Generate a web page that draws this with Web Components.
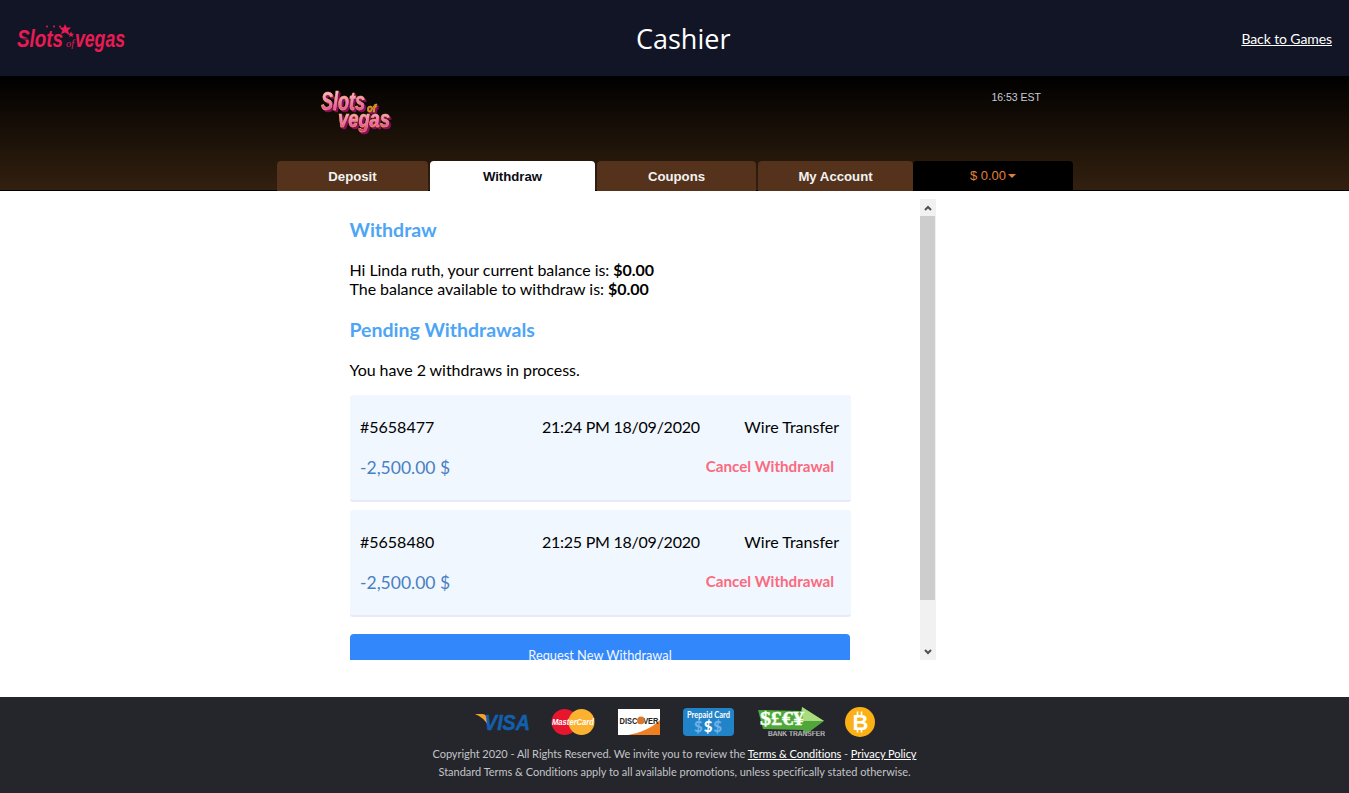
<!DOCTYPE html>
<html lang="en">
<head>
<meta charset="utf-8">
<title>Cashier</title>
<style>
  html, body { margin: 0; height: 100%; overflow: hidden; background: #fff; }
  body { font-family: Lato, "Liberation Sans", sans-serif; }
</style>
</head>
<body>
<cashier-app></cashier-app>

<script>
class CashierApp extends HTMLElement {
  connectedCallback() {
    this.attachShadow({ mode: 'open' });
    this.shadowRoot.innerHTML = `
      <style>
        :host { display: flex; flex-direction: column; height: 793px; }
        main { flex: 1; min-height: 0; padding: 8px 0 0 342px; background: #fff; }
      </style>
      <top-bar></top-bar>
      <cashier-banner active="Withdraw"></cashier-banner>
      <main><withdraw-panel></withdraw-panel></main>
      <site-footer></site-footer>
    `;
  }
}

class TopBar extends HTMLElement {
  connectedCallback() {
    this.attachShadow({ mode: 'open' });
    this.shadowRoot.innerHTML = `
      <style>
        :host { display: flex; align-items: center; justify-content: space-between; height: 76px; padding: 0 17px 0 18px; background: #111525; color: #fff; }
        svg { display: block; width: 107px; height: 30px; overflow: visible; }
        h1 { margin: 2px 0 0; font: 400 27px/38px "Open Sans", sans-serif; }
        a { color: #fff; margin-top: 2px; font: 400 14px/20px Lato, sans-serif; letter-spacing: -.1px; text-decoration: underline; }
      </style>
      <svg viewBox="0 0 107 30" aria-label="Slots of Vegas">
        <g fill="#ea1b53">
          <polygon points="47,1 48.6,4.4 53,4.4 50,7.4 51.4,12 47.2,9.4 43,11 44.4,7.4 41.4,4.4 45.6,4.6"/>
          <circle cx="29" cy="3.5" r="1"/><circle cx="36" cy="3.5" r="1"/><circle cx="42" cy="3.5" r="1"/>
          <polygon points="53,8.6 54,10.6 56,11 54.4,12.2 55,14.2 53,13.1 51.2,14.2 51.8,12.2 50,11 52,10.6"/>
          <text x="-1" y="24" font-family="'Liberation Sans', sans-serif" font-weight="700" font-style="italic" font-size="23" textLength="46" lengthAdjust="spacingAndGlyphs">Slots</text>
          <text x="48" y="24" font-family="'Liberation Serif', serif" font-style="italic" font-size="10" textLength="8" lengthAdjust="spacingAndGlyphs">of</text>
          <text x="57" y="24" font-family="'Liberation Sans', sans-serif" font-weight="700" font-style="italic" font-size="23" textLength="50" lengthAdjust="spacingAndGlyphs">vegas</text>
        </g>
        <rect x="-2" y="15.5" width="13" height="1" fill="#111525"/>
      </svg>
      <h1>Cashier</h1>
      <a href="#">Back to Games</a>
    `;
  }
}

class CashierBanner extends HTMLElement {
  connectedCallback() {
    const active = this.getAttribute('active');
    const tabs = ['Deposit', 'Withdraw', 'Coupons', 'My Account'];
    this.attachShadow({ mode: 'open' });
    this.shadowRoot.innerHTML = `
      <style>
        :host { display: block; height: 115px; box-sizing: border-box; padding-left: 277px; background: linear-gradient(#000, #33200f); border-bottom: 1px solid #000; }
        .wrap { width: 796px; height: 115px; display: flex; flex-direction: column; justify-content: space-between; }
        .top { display: flex; justify-content: space-between; padding: 14px 32px 0 41px; }
        svg { display: block; width: 74px; height: 44px; overflow: visible; filter: drop-shadow(1px 1px 0 #8a0f5c) drop-shadow(1px 1px 0 #8a0f5c); }
        time { font: 400 10.5px/14px "Liberation Sans", sans-serif; color: #c9ccd6; }
        nav { display: grid; grid-template-columns: 151px 165px 159px 155px 158px; column-gap: 2px; height: 30px; }
        nav a { font: 700 13.2px/31px "Liberation Sans", sans-serif; text-align: center; color: #f2f2f2; background: #54321b; border-radius: 4px 4px 0 0; text-decoration: none; }
        nav a.on { background: #fff; color: #0b0b14; }
        nav a.bal { margin-left: -2px; background: #000; color: #e08038; font-weight: 400; font-size: 13px; line-height: 30px; }
        nav a.bal::after { content: ""; display: inline-block; width: 0; height: 0; margin-left: 2px; vertical-align: 2px; border: 4px solid transparent; border-top-color: #e08038; border-bottom: 0; }
      </style>
      <div class="wrap">
        <div class="top">
          <svg viewBox="0 0 74 44" aria-label="Slots of Vegas">
            <defs>
              <linearGradient id="logo" x1="0" y1="0" x2="0" y2="1">
                <stop offset="0" stop-color="#ffd6f2"/><stop offset="1" stop-color="#e32a9c"/>
              </linearGradient>
            </defs>
            <g fill="url(#logo)" stroke="#efc12a" stroke-width=".5" font-family="'Liberation Sans', sans-serif" font-weight="700" font-style="italic">
              <text x="3" y="20" font-size="25" textLength="44" lengthAdjust="spacingAndGlyphs">Slots</text>
              <text x="49" y="22" font-size="11" fill="#b8860b" textLength="9" lengthAdjust="spacingAndGlyphs">of</text>
              <text x="20" y="37" font-size="23" textLength="52" lengthAdjust="spacingAndGlyphs">vegas</text>
            </g>
          </svg>
          <time>16:53 EST</time>
        </div>
        <nav>
          ${tabs.map(t => `<a href="#" class="${t === active ? 'on' : ''}">${t}</a>`).join('')}
          <a href="#" class="bal">$ 0.00</a>
        </nav>
      </div>
    `;
  }
}

class WithdrawPanel extends HTMLElement {
  connectedCallback() {
    this.attachShadow({ mode: 'open' });
    this.shadowRoot.innerHTML = `
      <style>
        :host { display: flex; width: 594px; height: 461px; }
        .scroll { width: 578px; overflow: hidden; box-sizing: border-box; padding: 18px 70px 0 8px; color: #000; font: 400 16px/19px Lato, sans-serif; }
        h2 { margin: 0 0 0 -.5px; color: #4ea5f6; font: 700 19.5px/26px Lato, sans-serif; }
        p { margin: 0 0 0 -.5px; letter-spacing: -.05px; }
        .bal { margin-top: 17px; }
        h2.pending { margin-top: 19px; }
        .count { margin-top: 17px; margin-bottom: 16px; }
        withdrawal-card + withdrawal-card { margin-top: 8px; }
        button { display: block; width: 500px; height: 42px; margin-top: 17px; padding: 0; border: 0; border-radius: 4px; background: #3287fb; color: #f2f7ff; font: 400 12.8px/19px Lato, sans-serif; }
        b { font-weight: 700; }
      </style>
      <div class="scroll">
        <h2>Withdraw</h2>
        <p class="bal">Hi Linda ruth, your current balance is: <b>$0.00</b><br>The balance available to withdraw is: <b>$0.00</b></p>
        <h2 class="pending">Pending Withdrawals</h2>
        <p class="count">You have 2 withdraws in process.</p>
        <withdrawal-card ref="#5658477" date="21:24 PM 18/09/2020"></withdrawal-card>
        <withdrawal-card ref="#5658480" date="21:25 PM 18/09/2020"></withdrawal-card>
        <button>Request New Withdrawal</button>
      </div>
      <fake-scrollbar></fake-scrollbar>
    `;
  }
}

class WithdrawalCard extends HTMLElement {
  connectedCallback() {
    this.attachShadow({ mode: 'open' });
    this.shadowRoot.innerHTML = `
      <style>
        :host { display: block; width: 501px; height: 107px; box-sizing: border-box; padding: 22px 12px 0 10px; background: #f0f7fe; border-radius: 3px; border-bottom: 2px solid #e6e9fa; font: 400 16px/20px Lato, sans-serif; }
        .first { display: grid; grid-template-columns: 182px 1fr auto; }
        .date { letter-spacing: -.25px; }
        .second { display: flex; justify-content: space-between; align-items: center; margin-top: 19px; padding-right: 5px; }
        .amt { color: #4a7fc1; font-size: 17.5px; line-height: 24px; }
        a { color: #fb6a7e; font-size: 15.2px; font-weight: 700; text-decoration: none; line-height: 20px; margin-top: -4px; }
      </style>
      <div class="first">
        <span>${this.getAttribute('ref')}</span>
        <span class="date">${this.getAttribute('date')}</span>
        <span>Wire Transfer</span>
      </div>
      <div class="second">
        <span class="amt">-2,500.00 $</span>
        <a href="#">Cancel Withdrawal</a>
      </div>
    `;
  }
}

class FakeScrollbar extends HTMLElement {
  connectedCallback() {
    this.attachShadow({ mode: 'open' });
    this.shadowRoot.innerHTML = `
      <style>
        :host { display: flex; flex-direction: column; width: 16px; height: 461px; background: #f1f1f1; }
        .btn { height: 17px; display: flex; align-items: center; justify-content: center; }
        .thumb { height: 384px; background: #cdcdcd; margin-right: 1px; }
        .track { flex: 1; }
        svg { width: 8px; height: 6px; fill: none; stroke: #505050; stroke-width: 2; }
      </style>
      <div class="btn"><svg viewBox="0 0 8 6"><path d="M1 5 L4 2 L7 5"/></svg></div>
      <div class="thumb"></div>
      <div class="track"></div>
      <div class="btn"><svg viewBox="0 0 8 6"><path d="M1 1 L4 4 L7 1"/></svg></div>
    `;
  }
}

class SiteFooter extends HTMLElement {
  connectedCallback() {
    this.attachShadow({ mode: 'open' });
    this.shadowRoot.innerHTML = `
      <style>
        :host { display: block; height: 96px; box-sizing: border-box; padding-top: 10px; background: #25262b; color: #c3c4c7; font: 400 11px/18px Lato, sans-serif; letter-spacing: -.05px; text-align: center; }
        .icons { display: flex; justify-content: center; height: 30px; margin-bottom: 8px; padding-left: 1px; }
        a { color: #fff; text-decoration: underline; }
        p { margin: 0; }
        p + p { letter-spacing: -.02px; }
      </style>
      <div class="icons"><pay-icons></pay-icons></div>
      <p>Copyright 2020 - All Rights Reserved. We invite you to review the <a href="#">Terms &amp; Conditions</a> - <a href="#">Privacy Policy</a></p>
      <p>Standard Terms &amp; Conditions apply to all available promotions, unless specifically stated otherwise.</p>
    `;
  }
}

class PayIcons extends HTMLElement {
  connectedCallback() {
    this.attachShadow({ mode: 'open' });
    this.shadowRoot.innerHTML = `
      <style>
        :host { display: flex; align-items: center; letter-spacing: 0; }
        svg { display: block; height: 30px; }
      </style>
      <svg width="55" viewBox="0 0 55 30">
        <path d="M0 7 L7 7 Q11 7 12 11 L14 20 Q10 11 0 7 Z" fill="#f2a51e"/>
        <text x="9" y="23" font-family="'Liberation Sans', sans-serif" font-weight="700" font-style="italic" font-size="22" fill="#1260ad" stroke="#1260ad" stroke-width=".5" textLength="46" lengthAdjust="spacingAndGlyphs">VISA</text>
      </svg>
      <svg width="44" viewBox="0 0 44 30" style="margin-left:21px">
        <circle cx="13.5" cy="15" r="13" fill="#e8152f"/>
        <circle cx="30.5" cy="15" r="13" fill="#fbb231"/>
        <text x="1" y="18" font-family="'Liberation Sans', sans-serif" font-weight="700" font-style="italic" font-size="9.5" fill="#fff" textLength="42" lengthAdjust="spacingAndGlyphs">MasterCard</text>
      </svg>
      <svg width="42" viewBox="0 0 42 28" style="margin-left:23px">
        <rect x="0" y="1" width="42" height="26" fill="#fff"/>
        <path d="M42 12 L42 27 L10 27 C22 25 34 20 42 12Z" fill="#ee7f23"/>
        <text x="1.5" y="15.5" font-family="'Liberation Sans', sans-serif" font-weight="700" font-size="9" fill="#222" textLength="39" lengthAdjust="spacingAndGlyphs">DISCOVER</text>
        <circle cx="23" cy="12.4" r="3.8" fill="#d9772a"/>
      </svg>
      <svg width="51" viewBox="0 0 51 30" style="margin-left:23px">
        <rect x="0" y="1" width="51" height="28" rx="4" fill="#2183c8"/>
        <text x="25.5" y="11" text-anchor="middle" font-family="Lato, sans-serif" font-weight="700" font-size="9" fill="#fff" textLength="43" lengthAdjust="spacingAndGlyphs">Prepaid Card</text>
        <text x="25.5" y="25" text-anchor="middle" font-family="Lato, sans-serif" font-weight="900" font-size="15" letter-spacing="1"><tspan fill="#6fb2e6">$</tspan><tspan fill="#fff">$</tspan><tspan fill="#6fb2e6">$</tspan></text>
      </svg>
      <svg width="68" viewBox="0 0 68 30" style="margin-left:23px">
        <path d="M1 3 L44 4 L45 0 L67 14 L48 28 L46 23 L6 22 Z" fill="#4fa63a"/>
        <path d="M45 0 L67 14 L46 14 Z" fill="#a9dc7e"/>
        <text x="3" y="18" font-family="'Liberation Serif', serif" font-weight="700" font-size="19" fill="#fff" stroke="#e9ffe0" stroke-width=".5" textLength="44" lengthAdjust="spacingAndGlyphs">$£€¥</text>
        <text x="11" y="28.5" font-family="'Liberation Sans', sans-serif" font-weight="700" font-size="7.5" fill="#e6e6e6" stroke="#222" stroke-width=".25" textLength="57" lengthAdjust="spacingAndGlyphs">BANK TRANSFER</text>
      </svg>
      <svg width="30" viewBox="0 0 30 30" style="margin-left:20px">
        <circle cx="15" cy="15" r="15" fill="#fbb116"/>
        <text x="15.5" y="23" text-anchor="middle" font-family="'Liberation Sans', sans-serif" font-weight="700" font-size="22" fill="#fff">B</text>
        <path d="M12.5 4.5v3.5M16.5 4.5v3.5M12.5 22v3.5M16.5 22v3.5" stroke="#fff" stroke-width="1.6"/>
      </svg>
    `;
  }
}

customElements.define('cashier-app', CashierApp);
customElements.define('top-bar', TopBar);
customElements.define('cashier-banner', CashierBanner);
customElements.define('withdraw-panel', WithdrawPanel);
customElements.define('withdrawal-card', WithdrawalCard);
customElements.define('fake-scrollbar', FakeScrollbar);
customElements.define('site-footer', SiteFooter);
customElements.define('pay-icons', PayIcons);
</script>
</body>
</html>
